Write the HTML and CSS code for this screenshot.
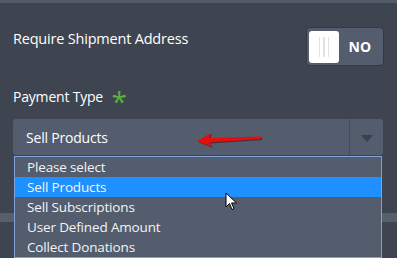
FILE: index.html
```html
<!DOCTYPE html>
<html>
<head>
<meta charset="utf-8">
<link rel="stylesheet" href="styles.css">
</head>
<body>
<div class="page">
  <div class="topbar"></div>
  <div class="row">
    <div class="label">Require Shipment Address</div>
    <div class="toggle">
      <div class="knob"><span></span><span></span><span></span></div>
      <div class="toggle-text">NO</div>
    </div>
  </div>
  <div class="field">
    <div class="label">Payment Type <span class="req">*</span></div>
    <div class="select-wrap">
      <div class="select">
        <div class="select-value">Sell Products</div>
        <div class="select-btn"><span class="tri"></span></div>
      </div>
      <ul class="options">
        <li>Please select</li>
        <li class="active">Sell Products</li>
        <li>Sell Subscriptions</li>
        <li>User Defined Amount</li>
        <li>Collect Donations</li>
      </ul>
      <svg class="arrow" width="72" height="20" viewBox="0 0 72 20">
        <path d="M2 11 L16 3 L14 8 L66 6.5 L66 9 L14 12.5 L17 17 Z" fill="#3a0000" opacity="0.5" transform="translate(1,1)"/>
        <path d="M2 11 L16 3 L14 8 L66 6.5 L66 9 L14 12.5 L17 17 Z" fill="#e80c0c"/>
      </svg>
      <svg class="cursor" width="14" height="20" viewBox="0 0 14 20">
        <path d="M1 1 L1 15 L4.5 11.5 L7 17.5 L9 16.6 L6.6 11 L11.5 11 Z" fill="#fff" stroke="#000" stroke-width="1" stroke-linejoin="round"/>
      </svg>
    </div>
  </div>
  <div class="divider"></div>
</div>
</body>
</html>
```
FILE: styles.css
```css
html, body {
  margin: 0;
  padding: 0;
}
body {
  background: #3f4550;
  font-family: "Open Sans", "Noto Sans", sans-serif;
  color: #ffffff;
  width: 397px;
  height: 258px;
  overflow: hidden;
}
.page {
  display: flex;
  flex-direction: column;
}
.topbar {
  height: 3px;
  background: #525b69;
}
.row {
  display: flex;
  align-items: flex-start;
  justify-content: space-between;
  padding: 24px 13px 0 13px;
}
.label {
  font-size: 14.5px;
  line-height: 20px;
  letter-spacing: -0.2px;
  padding-top: 2px;
}
.toggle {
  width: 76px;
  height: 37px;
  border: 1px solid #343a44;
  border-radius: 4px;
  background: #535d6d;
  display: flex;
  align-items: center;
  box-sizing: content-box;
}
.knob {
  width: 30px;
  height: 32px;
  margin-left: 2px;
  background: #fff;
  border-radius: 3px;
  display: flex;
  justify-content: center;
  gap: 3px;
  align-items: center;
}
.knob span {
  width: 1.5px;
  height: 20px;
  background: #e2e2e2;
}
.toggle-text {
  flex: 1;
  text-align: center;
  font-weight: 700;
  font-size: 14px;
  letter-spacing: 0.3px;
  padding-right: 2px;
}
.field {
  padding: 21px 13px 0 13px;
}
.field .label {
  padding-top: 0;
  height: 20px;
  font-size: 14px;
}
.req {
  color: #5cb13d;
  font-size: 28px;
  font-weight: 400;
  line-height: 14px;
  vertical-align: -10px;
  margin-left: 5px;
}
.select-wrap {
  position: relative;
  margin-top: 12px;
  width: 370px;
}
.select {
  height: 36px;
  background: #535d6d;
  border-radius: 3px;
  display: flex;
  align-items: stretch;
}
.select-value {
  flex: 1;
  font-size: 14px;
  letter-spacing: -0.2px;
  padding-left: 13px;
  display: flex;
  align-items: center;
}
.select-btn {
  width: 33px;
  border-left: 1px solid #444c59;
  display: flex;
  align-items: center;
  justify-content: center;
}
.tri {
  width: 0;
  height: 0;
  border-left: 6px solid transparent;
  border-right: 6px solid transparent;
  border-top: 7px solid #3b414b;
  margin-top: 2px;
}
.options {
  position: absolute;
  left: 1px;
  top: 37px;
  width: 366px;
  margin: 0;
  padding: 0;
  list-style: none;
  background: #535d6d;
  border: 1px solid #7fa2dc;
  z-index: 2;
}
.options li {
  height: 20px;
  line-height: 20px;
  font-size: 13.5px;
  letter-spacing: -0.15px;
  padding-left: 12px;
  color: #f4f4f4;
}
.options li.active {
  background: #1e90ff;
}
.arrow {
  position: absolute;
  left: 182px;
  top: 11px;
  z-index: 3;
}
.cursor {
  position: absolute;
  left: 212px;
  top: 73px;
  z-index: 3;
}
.divider {
  margin-top: 58px;
  height: 9px;
  background: #575f6d;
}
```
